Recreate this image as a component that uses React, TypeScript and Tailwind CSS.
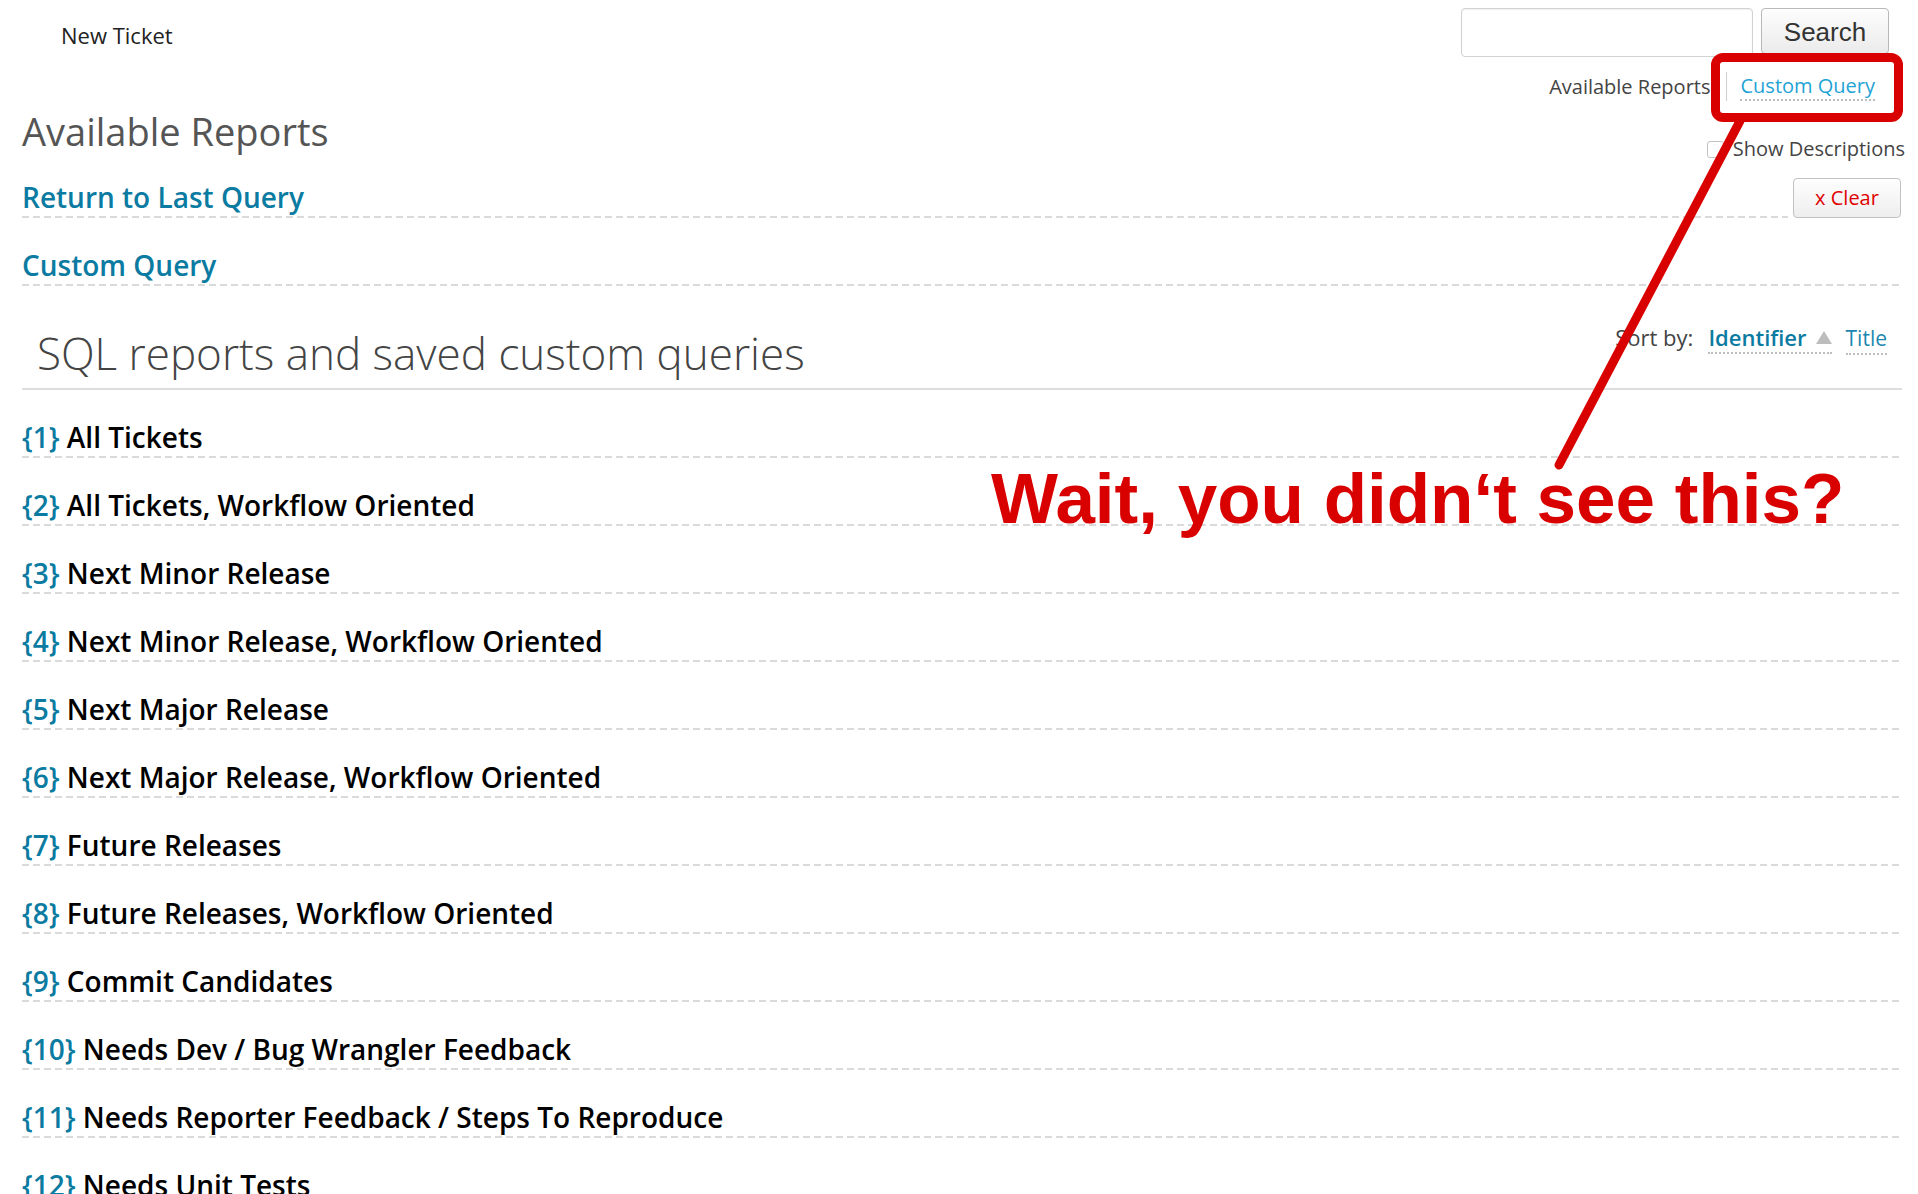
import React from "react"

const reports = [
  "All Tickets",
  "All Tickets, Workflow Oriented",
  "Next Minor Release",
  "Next Minor Release, Workflow Oriented",
  "Next Major Release",
  "Next Major Release, Workflow Oriented",
  "Future Releases",
  "Future Releases, Workflow Oriented",
  "Commit Candidates",
  "Needs Dev / Bug Wrangler Feedback",
  "Needs Reporter Feedback / Steps To Reproduce",
  "Needs Unit Tests",
  "Needs Docs or Unit Tests",
]

function Dash() {
  return (
    <div className="h-[2px] w-full bg-[repeating-linear-gradient(to_right,#dadada_0px,#dadada_7px,transparent_7px,transparent_11px)]" />
  )
}

export default function App() {
  return (
    <div className="relative h-[1194px] overflow-hidden bg-white font-['Open_Sans',sans-serif] text-[#222]">
      {/* top bar */}
      <header className="flex items-start justify-between pl-[61px] pr-[29px] pt-2">
        <a className="mt-[13px] text-[22px] leading-[28px] text-[#222]">New Ticket</a>
        <form className="flex items-start gap-2" onSubmit={(e) => e.preventDefault()}>
          <input
            type="text"
            className="h-[49px] w-[292px] rounded-[4px] border border-[#d2d2d2] bg-white px-3 shadow-[inset_0_1px_2px_rgba(0,0,0,0.06)] outline-none"
          />
          <button
            type="submit"
            className="h-[46px] w-[128px] rounded-[4px] border border-[#b9b9b9] bg-gradient-to-b from-[#fdfdfd] to-[#ebebeb] pt-[3px] font-['Liberation_Sans',Arial,sans-serif] text-[26px] text-[#333] shadow-[0_1px_1px_rgba(0,0,0,0.08)]"
          >
            Search
          </button>
        </form>
      </header>

      <main className="pl-[22px] pr-[16px]">
        <nav className="mt-[15px] flex items-center justify-end pr-[27px] text-[20px] leading-[28px]">
          <span className="pr-[16px] text-[#444]">Available Reports</span>
          <span className="border-l border-[#cfcfcf] pl-[13px]">
            <a className="inline-block border-b-2 border-dotted border-[#bdbdbd] leading-[26px] text-[#1ea3d5]">
              Custom Query
            </a>
          </span>
        </nav>

        <div className="mt-[4px] flex items-start justify-between">
          <h1 className="text-[38px] font-normal leading-[53px] text-[#555]">Available Reports</h1>
          <label className="-mr-[3px] mt-[30px] flex items-center gap-[9px] text-[20px] leading-[28px] text-[#444]">
            <span className="h-[17px] w-[17px] rounded-[3px] border border-[#c3c3c3] bg-white" />
            Show Descriptions
          </label>
        </div>

        <div className="flex items-end">
          <div className="flex-1">
            <a className="block pt-[15px] text-[28px] font-semibold leading-[38px] text-[#0b7ba2]">
              Return to Last Query
            </a>
            <Dash />
          </div>
          <button className="ml-[5px] mr-[1px] h-[40px] w-[108px] rounded-[4px] border border-[#c2c2c2] bg-gradient-to-b from-[#fefefe] to-[#eeeeee] text-[20px] text-[#e00000]">
            x Clear
          </button>
        </div>

        <a className="block pt-[28px] text-[28px] font-semibold leading-[38px] text-[#0b7ba2]">Custom Query</a>
        <Dash />

        <div className="flex items-start justify-between border-b-2 border-[#dddddd] pb-[6px] pt-[36px]">
          <h2 className="ml-[15px] mt-[2px] text-[44px] font-light leading-[58px] text-[#444]">
            SQL reports and saved custom queries
          </h2>
          <div className="mr-[15px] flex items-baseline text-[22px] leading-[30px] text-[#444]">
            <span>Sort by:</span>
            <a className="ml-[15px] inline-flex items-center gap-[9px] border-b-2 border-dotted border-[#bdbdbd] font-semibold text-[#0b7ba2]">
              Identifier
              <svg width="16" height="13" viewBox="0 0 16 13">
                <polygon points="8,0 16,13 0,13" fill="#bdbdbd" />
              </svg>
            </a>
            <a className="ml-[14px] border-b-2 border-dotted border-[#bdbdbd] text-[21px] text-[#1b87b0]">Title</a>
          </div>
        </div>

        {reports.map((title, i) => (
          <div key={i}>
            <a className="block pt-[28px] text-[28px] font-semibold leading-[38px] text-black">
              <span className="text-[#0b7ba2]">{`{${i + 1}}`}</span> {title}
            </a>
            <Dash />
          </div>
        ))}
      </main>

      {/* annotation */}
      <div className="pointer-events-none absolute left-[1711px] top-[53px] h-[69px] w-[192px] rounded-[12px] border-[9px] border-[#d90000]" />
      <svg className="pointer-events-none absolute left-0 top-0" width="1918" height="1194">
        <line x1="1740" y1="121" x2="1559" y2="465" stroke="#d90000" strokeWidth="9" strokeLinecap="round" />
      </svg>
      <p className="pointer-events-none absolute left-[991px] top-[463px] whitespace-nowrap font-['Liberation_Sans',Arial,sans-serif] text-[71px] font-bold leading-[71px] text-[#d90000]">
        Wait, you didn‘t see this?
      </p>
    </div>
  )
}
